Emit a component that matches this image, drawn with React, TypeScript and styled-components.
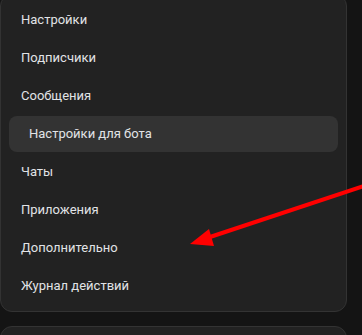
import * as React from "react";
import styled, { createGlobalStyle } from "styled-components";

const PAGE_BG = "#141414";
const PANEL_BG = "#222222";
const PANEL_BORDER = "#333333";
const ACTIVE_BG = "#333333";
const TEXT_COLOR = "#e1e3e6";

const menuItems = [
  { title: "Настройки" },
  { title: "Подписчики" },
  { title: "Сообщения" },
  { title: "Настройки для бота", active: true, nested: true },
  { title: "Чаты" },
  { title: "Приложения" },
  { title: "Дополнительно" },
  { title: "Журнал действий" },
];

const GlobalStyle = createGlobalStyle`
  html, body {
    margin: 0;
    padding: 0;
    background: ${PAGE_BG};
    overflow: hidden;
  }
  body {
    font-family: Roboto, "Noto Sans", "Liberation Sans", sans-serif;
  }
`;

const App: React.FC = () => {
  return (
    <Page>
      <GlobalStyle />
      <Column>
        <Panel>
          <Menu>
            {menuItems.map((item) => (
              <MenuItem key={item.title} $active={item.active} $nested={item.nested}>
                {item.title}
              </MenuItem>
            ))}
          </Menu>
        </Panel>
        <Panel $short />
      </Column>
      <Annotation width="362" height="335" viewBox="0 0 362 335">
        <line
          x1="370"
          y1="184"
          x2="204"
          y2="239"
          stroke="#ff0000"
          strokeWidth="4.2"
        />
        <polygon points="190,244 209,229 214,246" fill="#ff0000" />
      </Annotation>
    </Page>
  );
};

export default App;

const Page = styled.div`
  position: relative;
  width: 362px;
  height: 335px;
  overflow: hidden;
  background: ${PAGE_BG};
`;

const Column = styled.div`
  display: flex;
  flex-direction: column;
  gap: 14px;
  width: 347px;
  margin-top: -6px;
`;

const Panel = styled.div<{ $short?: boolean }>`
  box-sizing: border-box;
  background: ${PANEL_BG};
  border: 1px solid ${PANEL_BORDER};
  border-radius: 12px;
  min-height: ${(p) => (p.$short ? "60px" : "auto")};
`;

const Menu = styled.div`
  display: flex;
  flex-direction: column;
  gap: 2px;
  padding: 7px 8px;
`;

const MenuItem = styled.div<{ $active?: boolean; $nested?: boolean }>`
  display: flex;
  align-items: center;
  height: 36px;
  padding-left: ${(p) => (p.$nested ? "20px" : "12px")};
  border-radius: 8px;
  background: ${(p) => (p.$active ? ACTIVE_BG : "transparent")};
  color: ${TEXT_COLOR};
  font-size: 13px;
  line-height: 18px;
`;

const Annotation = styled.svg`
  position: absolute;
  left: 0;
  top: 0;
  pointer-events: none;
`;
